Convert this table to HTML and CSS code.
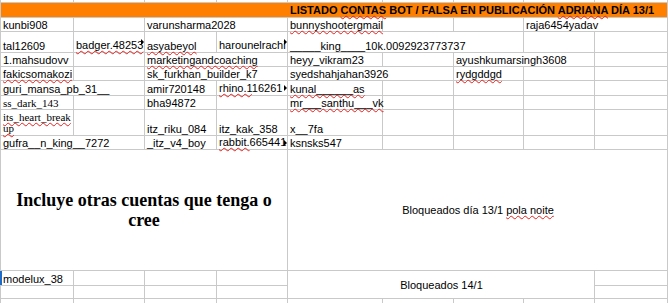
FILE: index.html
```html
<!DOCTYPE html>
<html lang="es">
<head>
<meta charset="UTF-8" />
<title>Listado contas bot</title>
<link rel="stylesheet" href="styles.css">
</head>
<body>
<div class="sheet">
	<!-- row above the title, almost scrolled away -->
	<div class="c"></div><div class="c"></div><div class="c"></div><div class="c"></div><div class="c"></div><div class="c"></div><div class="c"></div><div class="c"></div><div class="c"></div>

	<div class="c hdr span9"><span>LISTADO <span class="sp">CONTAS</span> BOT / FALSA EN PUBLICACIÓN <span class="sp">ADRIANA</span> DÍA 13/1</span></div>

	<div class="c">kunbi908</div>
	<div class="c"></div>
	<div class="c span2">varunsharma2028</div>
	<div class="c"><span class="sp">bunnyshootergmail</span></div>
	<div class="c"></div>
	<div class="c"></div>
	<div class="c span2">raja6454yadav</div>

	<div class="c">tal12609</div>
	<div class="c clip"><span class="sp">badger.48253</span></div>
	<div class="c"><span class="sp">asyabeyol</span></div>
	<div class="c clip">harounelrachi</div>
	<div class="c span3">_____king____10k.0092923773737</div>
	<div class="c"></div>
	<div class="c"></div>

	<div class="c">1.mahsudovv</div>
	<div class="c"></div>
	<div class="c span2"><span class="sp">marketingandcoaching</span></div>
	<div class="c">heyy_vikram23</div>
	<div class="c"></div>
	<div class="c span2">ayushkumarsingh3608</div>
	<div class="c"></div>

	<div class="c"><span class="sp">fakicsomakozi</span></div>
	<div class="c"></div>
	<div class="c span2">sk_furkhan_builder_k7</div>
	<div class="c span2">syedshahjahan3926</div>
	<div class="c"><span class="sp">rydgddgd</span></div>
	<div class="c"></div>
	<div class="c"></div>

	<div class="c span2">guri_mansa_pb_31__</div>
	<div class="c">amir720148</div>
	<div class="c clip"><span><span class="sp">rhino.1</span>16261</span></div>
	<div class="c"><span class="sp">kunal______as</span></div>
	<div class="c"></div>
	<div class="c"></div>
	<div class="c"></div>
	<div class="c"></div>

	<div class="c serif">ss_dark_143</div>
	<div class="c"></div>
	<div class="c">bha94872</div>
	<div class="c"></div>
	<div class="c"><span class="sp">mr___santhu___vk</span></div>
	<div class="c"></div>
	<div class="c"></div>
	<div class="c"></div>
	<div class="c"></div>

	<div class="c serif wrap"><span class="sp">its_heart_break up</span></div>
	<div class="c"></div>
	<div class="c">itz_riku_084</div>
	<div class="c">itz_kak_358</div>
	<div class="c">x__7fa</div>
	<div class="c"></div>
	<div class="c"></div>
	<div class="c"></div>
	<div class="c"></div>

	<div class="c span2">gufra__n_king__7272</div>
	<div class="c">_itz_v4_boy</div>
	<div class="c clip"><span><span class="sp">rabbit.</span>665441</span></div>
	<div class="c">ksnsks547</div>
	<div class="c"></div>
	<div class="c"></div>
	<div class="c"></div>
	<div class="c"></div>

	<div class="c span4 mid note">Incluye otras cuentas que tenga o cree</div>
	<div class="c span5 mid"><span>Bloqueados día 13/1 <span class="sp">pola noite</span></span></div>

	<div class="c cur">modelux_38</div>
	<div class="c"></div>
	<div class="c"></div>
	<div class="c"></div>
	<div class="c span4 tall mid">Bloqueados 14/1</div>
	<div class="c"></div>

	<div class="c"></div><div class="c"></div><div class="c"></div><div class="c"></div><div class="c"></div>

	<div class="c"></div><div class="c"></div><div class="c"></div><div class="c"></div><div class="c"></div><div class="c"></div><div class="c"></div><div class="c"></div><div class="c"></div>
</div>
</body>
</html>
```

FILE: styles.css
```css
body {
	margin: 0;
	background-color: white;
	overflow: hidden;
}

/* grid lines are the gaps showing the sheet background */
.sheet {
	display: grid;
	grid-template-columns: 72px 70px 71px 70px 94px 70px 69px 70px 72px;
	grid-template-rows: 2px 14px 13px 20px 13px 13px 14px 13px 25px 13px 120px 14px 12px 5px;
	gap: 1px;
	padding: 0 1px;
	width: 666px;
	background-color: #c9c9c9;
	font-family: "Liberation Sans", Arial, sans-serif;
	font-size: 11px;
	color: #000;
}

.c {
	background-color: white;
	display: flex;
	align-items: flex-end;
	padding: 0 1px 0 2px;
	line-height: 12px;
	white-space: nowrap;
	position: relative;
	min-width: 0;
}

.span2 { grid-column: span 2; }
.span3 { grid-column: span 3; }
.span4 { grid-column: span 4; }
.span5 { grid-column: span 5; }
.span9 { grid-column: span 9; }
.tall { grid-row: span 2; }

.hdr {
	background-color: #ff8000;
	font-weight: bold;
	padding-left: 289px;
	line-height: 13px;
}

/* spell check squiggle, drawn above the next row's cells */
.sp {
	position: relative;
	z-index: 1;
	text-decoration: underline wavy #e8201c;
	text-decoration-thickness: 1px;
	text-underline-offset: 1px;
	text-decoration-skip-ink: none;
}

/* text cut by the next filled cell, with the little arrow */
.clip {
	overflow-x: clip;
	overflow-y: visible;
	padding-bottom: 1px;
}

.clip::after {
	content: "";
	position: absolute;
	z-index: 2;
	right: 0;
	top: 50%;
	margin-top: -3px;
	border-left: 3px solid #000;
	border-top: 3px solid transparent;
	border-bottom: 3px solid transparent;
}

.serif {
	font-family: "Liberation Serif", "Times New Roman", serif;
}

.wrap {
	white-space: normal;
	line-height: 11px;
	padding-bottom: 1px;
}

.mid {
	justify-content: center;
	align-items: center;
	text-align: center;
	white-space: normal;
}

.note {
	font-family: "Liberation Serif", "Times New Roman", serif;
	font-weight: bold;
	font-size: 18px;
	line-height: 20px;
	padding: 0 2px;
}

/* cell cursor */
.cur {
	box-shadow: -1px 0 0 #1c6ac9, inset 1px 0 0 #1c6ac9;
}
```
